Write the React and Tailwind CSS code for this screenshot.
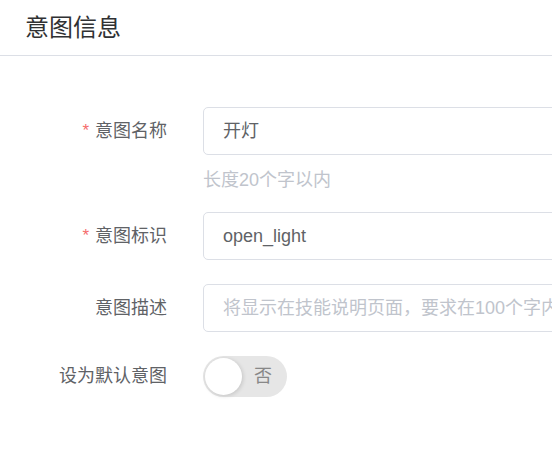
const font = { fontFamily: '"Liberation Sans", "Noto Sans CJK SC", sans-serif' }

function Label({ required, children }) {
  return (
    <div className="w-[167px] shrink-0 flex justify-end items-center text-[18px] text-[#606266]">
      {required && <span className="text-[#f56c6c] mr-[6px] text-[17px]">*</span>}
      <span>{children}</span>
    </div>
  )
}

function Input({ value, placeholder }) {
  return (
    <div className="ml-[36px] w-[420px] shrink-0 h-[48px] border border-[#dcdfe6] rounded-[5px] flex items-center px-[19px] text-[18px]">
      {value ? (
        <span className="text-[#606266]">{value}</span>
      ) : (
        <span className="text-[#c0c4cc] whitespace-nowrap">{placeholder}</span>
      )}
    </div>
  )
}

export default function App() {
  return (
    <div className="w-[552px] h-[455px] overflow-hidden bg-white" style={font}>
      <div className="h-[56px] border-b border-[#dcdfe6] flex items-center px-[25px]">
        <span className="text-[24px] text-[#303133]">意图信息</span>
      </div>

      <div className="pt-[51px]">
        <div className="flex items-center">
          <Label required>意图名称</Label>
          <Input value="开灯" />
        </div>
        <div className="ml-[203px] mt-[13px] mb-[20px] h-[24px] leading-[24px] text-[18px] text-[#c0c4cc]">
          长度20个字以内
        </div>

        <div className="flex items-center">
          <Label required>意图标识</Label>
          <Input value="open_light" />
        </div>

        <div className="flex items-center mt-[24px]">
          <Label>意图描述</Label>
          <Input placeholder="将显示在技能说明页面，要求在100个字内" />
        </div>

        <div className="flex items-center mt-[24px]">
          <Label>设为默认意图</Label>
          <div className="ml-[36px] w-[84px] h-[41px] rounded-full bg-[#e6e6e6] flex items-center px-[2px] shrink-0">
            <div className="w-[37px] h-[37px] rounded-full bg-white shadow-[1px_1px_4px_rgba(0,0,0,0.15)]" />
            <span className="ml-[12px] text-[18px] text-[#888]">否</span>
          </div>
        </div>
      </div>
    </div>
  )
}
